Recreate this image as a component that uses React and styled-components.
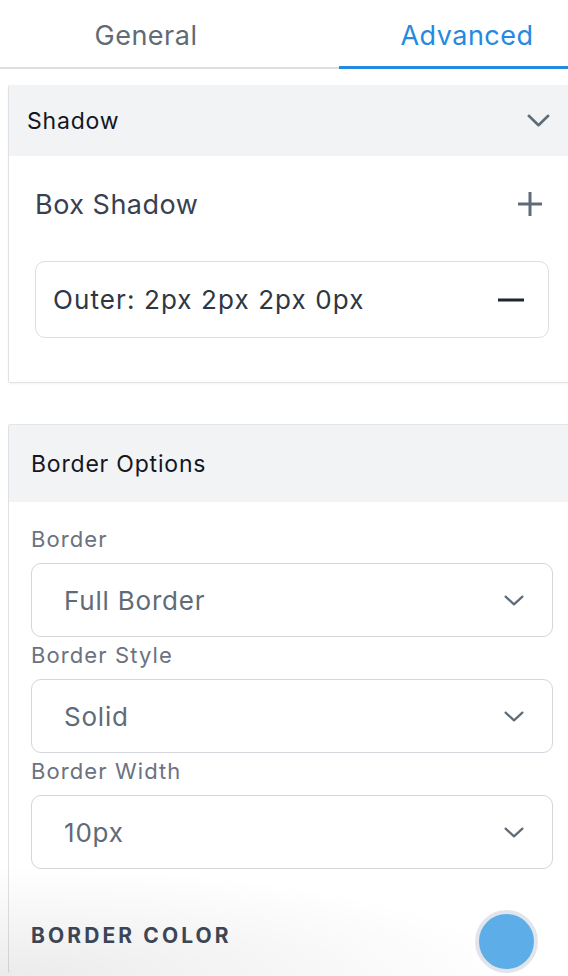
import React from "react";
import styled, { createGlobalStyle } from "styled-components";

const GlobalStyle = createGlobalStyle`
  html, body {
    margin: 0;
    padding: 0;
    background: #ffffff;
  }

  body {
    font-family: Inter, "Noto Sans", "Liberation Sans", sans-serif;
    -webkit-font-smoothing: antialiased;
    overflow: hidden;
  }
`;

const Page = styled.div`
  position: relative;
  width: 568px;
  height: 976px;
  overflow: hidden;
`;

const TabBar = styled.div`
  display: grid;
  grid-template-columns: 339px 1fr;
  height: 67px;
  border-bottom: 2px solid #dcdfe3;
`;

const Tab = styled.div`
  display: flex;
  align-items: center;
  justify-content: center;
  padding-left: ${(p) => p.$padLeft || 0}px;
  padding-right: ${(p) => p.$padRight || 0}px;
  padding-top: 4px;
  margin-bottom: -2px;
  font-size: 27px;
  letter-spacing: 0.5px;
  color: ${(p) => (p.$active ? "#2589e0" : "#5f6b76")};
  border-bottom: 3px solid ${(p) => (p.$active ? "#2589e0" : "transparent")};
`;

const Content = styled.div`
  padding: 16px 0 0 8px;
`;

const Panel = styled.section`
  border-left: 1px solid #dfe1e4;
  border-top: ${(p) => (p.$top ? "1px solid #e3e5e8" : "none")};
  border-bottom: ${(p) => (p.$bottom ? "1px solid #e1e3e6" : "none")};
  border-radius: 2px 0 0 2px;
  box-shadow: ${(p) => (p.$bottom ? "0 1px 2px rgba(0, 0, 0, 0.05)" : "none")};
  margin-bottom: ${(p) => p.$gap || 0}px;
`;

const PanelHeader = styled.header`
  display: flex;
  align-items: center;
  justify-content: space-between;
  height: ${(p) => p.$height}px;
  padding: 0 18px 0 ${(p) => p.$indent}px;
  background: #f2f3f5;
`;

const HeaderTitle = styled.h3`
  margin: 0;
  font-size: 23px;
  font-weight: 400;
  letter-spacing: 0.8px;
  color: #14171f;
`;

const ShadowBody = styled.div`
  display: flex;
  flex-direction: column;
  gap: 33px;
  padding: 24px 19px 44px 26px;
`;

const RowHeader = styled.div`
  display: flex;
  align-items: center;
  justify-content: space-between;
  height: 48px;
`;

const RowTitle = styled.span`
  font-size: 27px;
  letter-spacing: 0.5px;
  color: #374151;
`;

const IconButton = styled.button`
  display: flex;
  align-items: center;
  justify-content: center;
  padding: 0;
  margin-right: ${(p) => p.$right || 0}px;
  border: none;
  background: none;
  color: ${(p) => p.$color || "#5f6b76"};
  cursor: pointer;
`;

const ShadowItem = styled.div`
  display: flex;
  align-items: center;
  justify-content: space-between;
  height: 77px;
  box-sizing: border-box;
  padding: 0 24px 0 17px;
  border: 1.5px solid #dcdee2;
  border-radius: 10px;
  font-size: 26px;
  letter-spacing: 1.1px;
  color: #2f3644;
`;

const FieldsBody = styled.div`
  padding: 23px 15px 0 22px;
`;

const FieldLabel = styled.label`
  display: block;
  font-size: 22px;
  line-height: 28px;
  letter-spacing: 1.1px;
  color: #6b7280;
  margin-bottom: 10px;
`;

const Select = styled.div`
  display: flex;
  align-items: center;
  justify-content: space-between;
  height: 74px;
  box-sizing: border-box;
  margin-bottom: 4px;
  padding: 0 28px 0 32px;
  border: 1.5px solid #d3d6db;
  border-radius: 10px;
  font-size: 26px;
  letter-spacing: 0.8px;
  color: #5f6b76;
`;

const ColorRow = styled.div`
  display: flex;
  align-items: center;
  justify-content: space-between;
  margin-top: 41px;
  padding-right: 15px;
`;

const ColorLabel = styled.span`
  font-size: 21px;
  font-weight: 700;
  letter-spacing: 3.1px;
  color: #3f4859;
  padding-bottom: 13px;
`;

const Swatch = styled.div`
  width: 63px;
  height: 63px;
  box-sizing: border-box;
  border-radius: 50%;
  border: 4px solid #e2e6ec;
  background: ${(p) => p.$color};
`;

const BottomFade = styled.div`
  position: absolute;
  left: 0;
  right: 0;
  bottom: 0;
  height: 110px;
  pointer-events: none;
  background: radial-gradient(
    ellipse 520px 110px at 0% 100%,
    rgba(0, 0, 0, 0.08),
    rgba(0, 0, 0, 0) 100%
  );
`;

const Chevron = ({ width = 20, height = 11, stroke = 2.2 }) => (
  <svg width={width} height={height} viewBox={`0 0 ${width} ${height}`} fill="none">
    <path
      d={`M${stroke / 2 + 0.5} ${stroke / 2 + 0.5} L${width / 2} ${height - stroke / 2 - 0.5} L${width - stroke / 2 - 0.5} ${stroke / 2 + 0.5}`}
      stroke="currentColor"
      strokeWidth={stroke}
      strokeLinecap="round"
      strokeLinejoin="round"
    />
  </svg>
);

const Plus = () => (
  <svg width="26" height="26" viewBox="0 0 26 26" fill="none">
    <path d="M13 1v24M1 13h24" stroke="currentColor" strokeWidth="3" />
  </svg>
);

const Minus = () => (
  <svg width="26" height="4" viewBox="0 0 26 4" fill="none">
    <path d="M0 2h26" stroke="currentColor" strokeWidth="3" strokeLinecap="round" />
  </svg>
);

const fields = [
  { label: "Border", value: "Full Border" },
  { label: "Border Style", value: "Solid" },
  { label: "Border Width", value: "10px" },
];

export default function App() {
  return (
    <Page>
      <GlobalStyle />
      <TabBar>
        <Tab $padRight={47}>General</Tab>
        <Tab $active $padLeft={27}>Advanced</Tab>
      </TabBar>

      <Content>
        <Panel $bottom $gap={41}>
          <PanelHeader $height={71} $indent={18}>
            <HeaderTitle>Shadow</HeaderTitle>
            <span style={{ color: "#5f6b76", display: "flex" }}>
              <Chevron width={23} height={13} stroke={2.6} />
            </span>
          </PanelHeader>
          <ShadowBody>
            <RowHeader>
              <RowTitle>Box Shadow</RowTitle>
              <IconButton $right={6} aria-label="Add shadow">
                <Plus />
              </IconButton>
            </RowHeader>
            <ShadowItem>
              <span>Outer: 2px 2px 2px 0px</span>
              <IconButton $color="#1f2533" aria-label="Remove shadow">
                <Minus />
              </IconButton>
            </ShadowItem>
          </ShadowBody>
        </Panel>

        <Panel $top>
          <PanelHeader $height={77} $indent={22}>
            <HeaderTitle>Border Options</HeaderTitle>
          </PanelHeader>
          <FieldsBody>
            {fields.map((f) => (
              <div key={f.label}>
                <FieldLabel>{f.label}</FieldLabel>
                <Select>
                  <span>{f.value}</span>
                  <span style={{ display: "flex" }}>
                    <Chevron />
                  </span>
                </Select>
              </div>
            ))}
            <ColorRow>
              <ColorLabel>BORDER COLOR</ColorLabel>
              <Swatch $color="#5daee8" />
            </ColorRow>
          </FieldsBody>
        </Panel>
      </Content>
      <BottomFade />
    </Page>
  );
}
